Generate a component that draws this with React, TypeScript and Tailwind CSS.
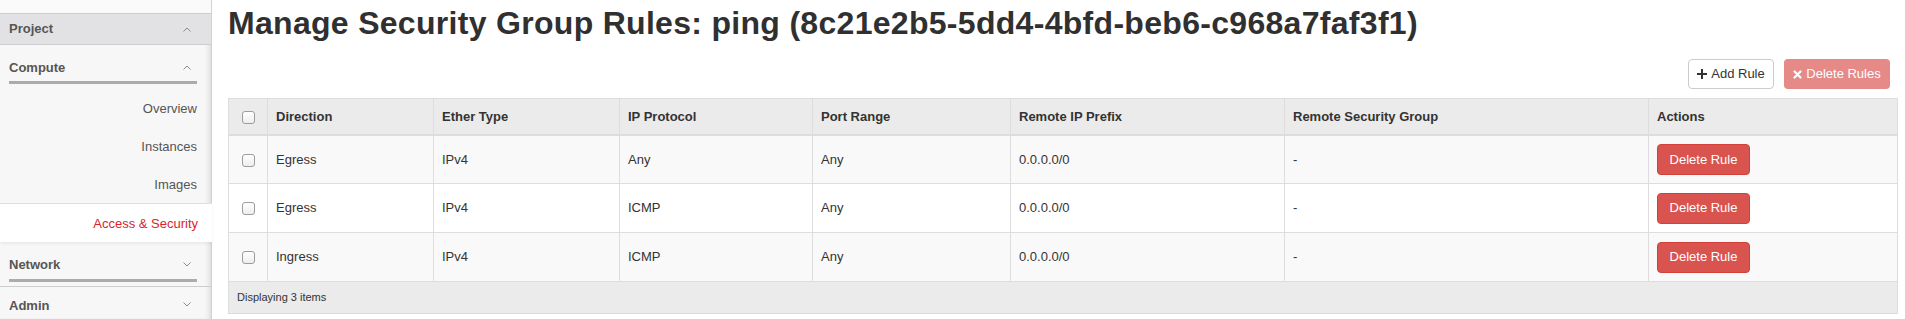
import React from 'react';

type Rule = {
  direction: string;
  ether: string;
  protocol: string;
  port: string;
  prefix: string;
  group: string;
};

const rules: Rule[] = [
  { direction: 'Egress', ether: 'IPv4', protocol: 'Any', port: 'Any', prefix: '0.0.0.0/0', group: '-' },
  { direction: 'Egress', ether: 'IPv4', protocol: 'ICMP', port: 'Any', prefix: '0.0.0.0/0', group: '-' },
  { direction: 'Ingress', ether: 'IPv4', protocol: 'ICMP', port: 'Any', prefix: '0.0.0.0/0', group: '-' },
];

// thin caret used in the side nav headers
const Caret: React.FC<{ up?: boolean }> = ({ up }) => (
  <svg width="8" height="5" viewBox="0 0 8 5" className="shrink-0">
    <polyline
      points={up ? '0.5,4.5 4,1 7.5,4.5' : '0.5,0.5 4,4 7.5,0.5'}
      fill="none"
      stroke="#8a8a8a"
      strokeWidth="1"
    />
  </svg>
);

const CheckBox: React.FC = () => (
  <span className="inline-block w-[13px] h-[13px] rounded-[3px] border border-[#9c9c9c] bg-gradient-to-b from-white to-[#eeeeee] align-middle" />
);

const NavItem: React.FC<{ label: string; active?: boolean }> = ({ label, active }) => (
  <div
    className={
      active
        ? 'h-[39px] flex items-center justify-end pr-[14px] bg-white text-[#d9232d] border-t border-[#dedede] shadow-[0_2px_3px_rgba(0,0,0,0.06)] -mr-px'
        : 'h-[38px] flex items-center justify-end pr-[14px] text-[#555]'
    }
  >
    {label}
  </div>
);

const Sidebar: React.FC = () => (
  <aside className="w-[212px] shrink-0 h-[319px] bg-[#f7f7f7] border-r border-[#d2d2d2] shadow-[inset_-5px_0_6px_-4px_rgba(0,0,0,0.15)] text-[13px] flex flex-col">
    <div className="h-[14px] bg-[#fafafa] border-b border-[#cdcdcd]" />
    {/* Project */}
    <div className="h-[32px] bg-[#e2e2e4] border-b border-[#cdcdcd] flex items-center justify-between pl-[9px] pr-[20px] font-bold text-[#555]">
      <span>Project</span>
      <Caret up />
    </div>
    {/* Compute */}
    <div className="px-[9px] pt-[14px]">
      <div className="h-[16px] flex items-center justify-between pr-[11px] font-bold text-[#555]">
        <span>Compute</span>
        <Caret up />
      </div>
      <div className="mt-[6px] h-[3px] w-[188px] bg-[#ababab]" />
    </div>
    <div className="mt-[5px]">
      <NavItem label="Overview" />
      <NavItem label="Instances" />
      <NavItem label="Images" />
      <NavItem label="Access & Security" active />
    </div>
    {/* Network */}
    <div className="px-[9px] pt-[14px] border-b border-[#cdcdcd] pb-[4px]">
      <div className="h-[16px] flex items-center justify-between pr-[11px] font-bold text-[#555]">
        <span>Network</span>
        <Caret />
      </div>
      <div className="mt-[7px] h-[3px] w-[188px] bg-[#ababab]" />
    </div>
    {/* Admin */}
    <div className="px-[9px] pt-[9px] h-[32px] flex items-start justify-between pr-[20px] font-bold text-[#555]">
      <span>Admin</span>
      <span className="pt-[6px]">
        <Caret />
      </span>
    </div>
  </aside>
);

const App: React.FC = () => {
  return (
    <div className="w-[1905px] h-[319px] flex bg-white overflow-hidden font-['Liberation_Sans',Arial,sans-serif] text-[#333]">
      <Sidebar />

      {/* Main Content Area */}
      <main className="flex-1 pl-4 pr-2">
        <h1 className="pt-[6px] text-[32px] leading-[35px] font-bold tracking-[0.3px] text-[#303030] whitespace-nowrap">
          Manage Security Group Rules: ping (8c21e2b5-5dd4-4bfd-beb6-c968a7faf3f1)
        </h1>

        {/* Table actions */}
        <div className="mt-[18px] mr-2 flex justify-end gap-[10px] text-[13px]">
          <button className="h-[30px] w-[86px] flex items-center justify-center gap-[4px] rounded-[4px] border border-[#cccccc] bg-white text-[#333]">
            <svg width="10" height="10" viewBox="0 0 10 10">
              <path d="M4 0h2v4h4v2H6v4H4V6H0V4h4z" fill="#333" />
            </svg>
            Add Rule
          </button>
          <button className="h-[30px] w-[106px] flex items-center justify-center gap-[4px] rounded-[4px] bg-[#e58a87] text-white">
            <svg width="9" height="9" viewBox="0 0 9 9">
              <path d="M1.5 1.5l6 6M7.5 1.5l-6 6" stroke="#fff" strokeWidth="2.2" strokeLinecap="round" />
            </svg>
            Delete Rules
          </button>
        </div>

        {/* Rules table */}
        <table className="mt-[9px] w-[1669px] table-fixed border-collapse text-[13px] text-[#333]">
          <colgroup>
            <col className="w-[39px]" />
            <col className="w-[166px]" />
            <col className="w-[186px]" />
            <col className="w-[193px]" />
            <col className="w-[198px]" />
            <col className="w-[274px]" />
            <col className="w-[364px]" />
            <col className="w-[249px]" />
          </colgroup>
          <thead>
            <tr className="h-[36px] bg-[#ebebeb]">
              <th className="border border-b-2 border-[#dddddd] text-center align-middle">
                <CheckBox />
              </th>
              {['Direction', 'Ether Type', 'IP Protocol', 'Port Range', 'Remote IP Prefix', 'Remote Security Group', 'Actions'].map(
                (h) => (
                  <th key={h} className="border border-b-2 border-[#dddddd] px-2 text-left font-bold align-middle">
                    {h}
                  </th>
                )
              )}
            </tr>
          </thead>
          <tbody>
            {rules.map((r, i) => (
              <tr key={i} className={i % 2 === 0 ? 'h-[49px] bg-[#f9f9f9]' : 'h-[49px] bg-white'}>
                <td className="border border-[#dddddd] text-center align-middle">
                  <CheckBox />
                </td>
                <td className="border border-[#dddddd] px-2">{r.direction}</td>
                <td className="border border-[#dddddd] px-2">{r.ether}</td>
                <td className="border border-[#dddddd] px-2">{r.protocol}</td>
                <td className="border border-[#dddddd] px-2">{r.port}</td>
                <td className="border border-[#dddddd] px-2">{r.prefix}</td>
                <td className="border border-[#dddddd] px-2">{r.group}</td>
                <td className="border border-[#dddddd] px-2">
                  <button className="h-[31px] w-[93px] rounded-[4px] bg-[#d9534f] border border-[#d43f3a] text-white text-[13px]">
                    Delete Rule
                  </button>
                </td>
              </tr>
            ))}
          </tbody>
          <tfoot>
            <tr className="h-[32px] bg-[#ebebeb]">
              <td colSpan={8} className="border border-[#dddddd] px-2 text-[11px]">
                Displaying 3 items
              </td>
            </tr>
          </tfoot>
        </table>
      </main>
    </div>
  );
};

export default App;
